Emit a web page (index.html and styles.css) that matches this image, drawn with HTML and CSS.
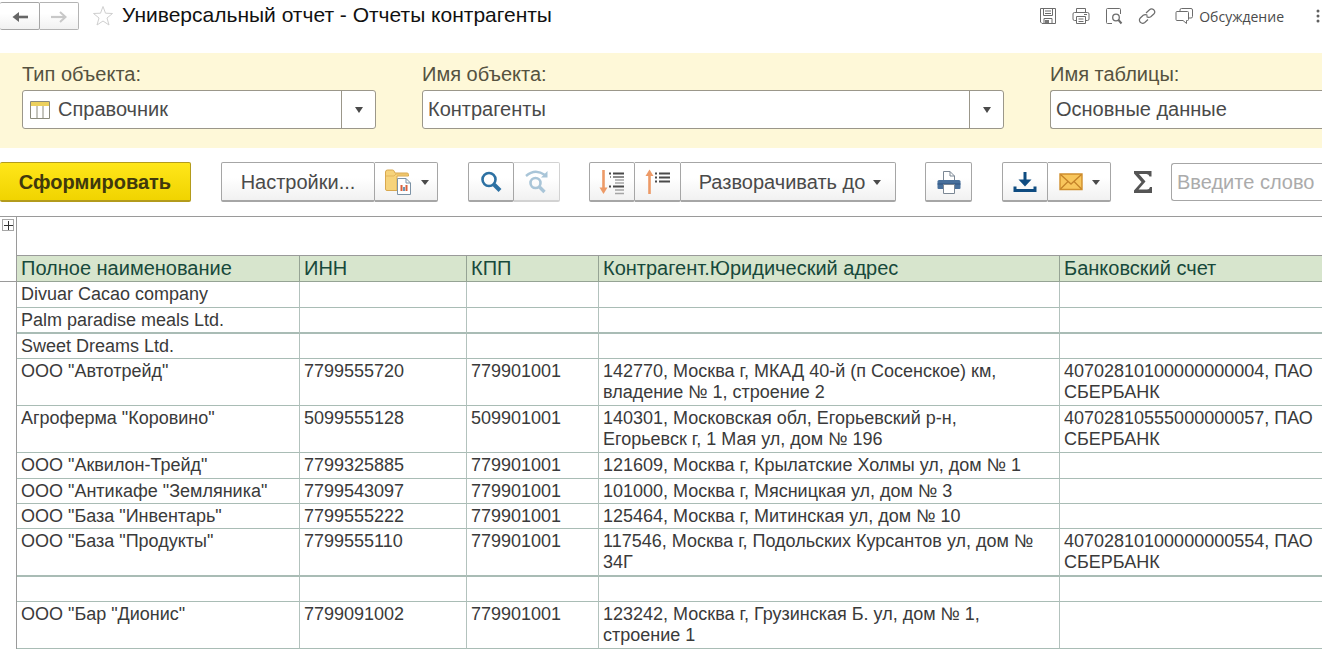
FILE: index.html
```html
<!DOCTYPE html>
<html lang="ru">
<head>
<meta charset="utf-8">
<title>Универсальный отчет - Отчеты контрагенты</title>
<link rel="stylesheet" href="styles.css">
</head>
<body>
<div class="page">
  <header class="titlebar">
    <div class="group nav">
      <button class="btn" type="button" aria-label="Назад"><svg width="18" height="14" viewBox="0 0 18 14"><path d="M5 7H17" stroke="#666" stroke-width="2.600"/><path d="M1.500 7L8 2V12Z" fill="#666"/></svg></button>
      <button class="btn" type="button" aria-label="Вперед" disabled><svg width="18" height="14" viewBox="0 0 18 14"><path d="M1 7H14" stroke="#c8c8c8" stroke-width="2.200"/><path d="M10 2L15.500 7L10 12" fill="none" stroke="#c8c8c8" stroke-width="2"/></svg></button>
    </div>
    <button class="plain star" type="button" aria-label="В избранное"><svg width="22" height="22" viewBox="0 0 22 22"><path d="M11 1.500L13.500 8.200L20.500 8.500L15 13L17 20L11 16L5 20L7 13L1.500 8.500L8.500 8.200Z" fill="#fff" stroke="#cfcfcf"/></svg></button>
    <h1 class="title">Универсальный отчет - Отчеты контрагенты</h1>
    <div class="tools">
      <button class="plain" type="button" aria-label="Сохранить"><svg width="18" height="18" viewBox="0 0 18 18" fill="none" stroke="#6c6c6c"><path d="M1.500 1.500H16.500V16.500H3L1.500 15Z"/><path d="M4.500 1.500V8.500H13.500V1.500M6 4H12M6 6.500H12M5 16.500V11.500H13V16.500"/><path d="M6 13H10V16H6Z" fill="#777" stroke="none"/></svg></button>
      <button class="plain" type="button" aria-label="Печать"><svg width="18" height="18" viewBox="0 0 18 18" fill="none" stroke="#6c6c6c"><path d="M4.500 5V1.500H13.500V5M4 13.500H2.500Q1 13.500 1 12V7Q1 5.500 2.500 5.500H15.500Q17 5.500 17 7V12Q17 13.500 15.500 13.500H14"/><path d="M4.500 9.500H13.500V16.500H4.500ZM6.500 12H11.500M6.500 14.500H11.500M12 7.500H15"/></svg></button>
      <button class="plain" type="button" aria-label="Просмотр"><svg width="18" height="18" viewBox="0 0 18 18" fill="none" stroke="#6c6c6c"><path d="M7 16.500H2.500Q1.500 16.500 1.500 15.500V2.500Q1.500 1.500 2.500 1.500H14.500Q15.500 1.500 15.500 2.500V7"/><circle cx="11" cy="10.500" r="3.300" stroke-width="1.300"/><path d="M13.500 13L16.500 16.500" stroke-width="2"/></svg></button>
      <button class="plain" type="button" aria-label="Ссылка"><svg width="18" height="18" viewBox="0 0 18 18" fill="none" stroke="#6c6c6c" stroke-width="1.200"><path d="M8 6L11.500 2.800Q13.500 1 15.800 2.800Q17.800 5 15.800 7L12.800 9.800Q10.500 11.300 8.500 9.500"/><path d="M10 12.500L6.800 15.500Q4.500 17.200 2.300 15.300Q.5 13 2.300 11L5.200 8.300Q7.500 6.700 9.500 8.500"/></svg></button>
      <button class="plain discuss" type="button"><svg width="18" height="18" viewBox="0 0 18 18" fill="none" stroke="#6c6c6c"><path d="M5 4.500V3Q5 1.500 6.500 1.500H16Q17.500 1.500 17.500 3V9.500Q17.500 11 16 11H14"/><path d="M2 4.500H12.500Q13.500 4.500 13.500 5.500V12.500Q13.500 13.500 12.500 13.500H11.500V16.500L8 13.500H2Q1 13.500 1 12.500V5.500Q1 4.500 2 4.500Z" fill="#fff"/></svg>Обсуждение</button>
      <button class="plain more" type="button" aria-label="Еще"><svg width="4" height="14" viewBox="0 0 4 14" fill="#5f5f5f"><circle cx="2" cy="2" r="1.500"/><circle cx="2" cy="7" r="1.500"/><circle cx="2" cy="12" r="1.500"/></svg></button>
    </div>
  </header>

  <section class="filters">
    <div class="field type">
      <label for="type">Тип объекта:</label>
      <div class="combo with-icon">
        <svg class="lead" width="20" height="18" viewBox="0 0 20 18"><path d="M.5 .5H19.500V17.500H.5Z" fill="#fff" stroke="#8a8a7c"/><path d="M1 1H19V5H1Z" fill="#ecd05c"/><path d="M7 5V17M13 5V17" stroke="#8a8a7c"/></svg>
        <select id="type"><option>Справочник</option></select>
        <span class="arrow"></span>
      </div>
    </div>
    <div class="field object">
      <label for="object">Имя объекта:</label>
      <div class="combo">
        <select id="object"><option>Контрагенты</option></select>
        <span class="arrow"></span>
      </div>
    </div>
    <div class="field table-name">
      <label for="table">Имя таблицы:</label>
      <div class="combo open-end">
        <select id="table"><option>Основные данные</option></select>
      </div>
    </div>
  </section>

  <div class="toolbar">
    <button class="btn primary" type="button">Сформировать</button>
    <div class="group">
      <button class="btn settings" type="button">Настройки...</button>
      <button class="btn menu" type="button" aria-label="Варианты отчета"><svg width="28" height="28" viewBox="0 0 28 28"><path d="M1.500 21V4Q1.500 2 3.500 2H8.500Q10 2 10.500 4L11 5H23Q24.500 5 24.500 6.500V8H13V22.500H3Q1.500 22.500 1.500 21Z" fill="#f6d37b" stroke="#d9a84e"/><path d="M2 8H10L12 6H24" fill="none" stroke="#e3b55e"/><path d="M13.500 10.500H22L26.500 15V26.500H13.500Z" fill="#fff" stroke="#7c93a6"/><path d="M22 10.500V15H26.500" fill="none" stroke="#7c93a6"/><path d="M16.500 17H18.500V23H16.500ZM21.500 17H23.500V23H21.500Z" fill="#d9603b"/><path d="M19 19H21V23H19Z" fill="#6b97b5"/></svg><span class="caret"></span></button>
    </div>
    <div class="group search-group">
      <button class="btn icon" type="button" aria-label="Найти"><svg width="22" height="22" viewBox="0 0 22 22" fill="none" stroke="#2d71a3"><circle cx="9" cy="8.500" r="6.500" stroke-width="2.600"/><path d="M14 13.500L20 19.500" stroke-width="4"/></svg></button>
      <button class="btn icon" type="button" aria-label="Найти далее" disabled><svg width="24" height="24" viewBox="0 0 24 24" fill="none" stroke="#a9c5d8"><path d="M1 6Q10 -2 20 5" stroke-width="2.400"/><path d="M22.500 1V7.500H16Z" fill="#a9c5d8" stroke="none"/><circle cx="10.500" cy="13" r="5" stroke-width="2.600"/><path d="M14.500 17L19.500 22" stroke-width="3.400"/></svg></button>
    </div>
    <div class="group expand-group">
      <button class="btn icon" type="button" aria-label="Развернуть все"><svg width="26" height="26" viewBox="0 0 26 26"><path d="M4.500 1V20" stroke="#ed9a67" stroke-width="2.600"/><path d="M.5 18.500H8.500L4.500 25Z" fill="#ed9a67"/><path d="M10 4.500H12M14 4.500H25M10 17.500H12M14 17.500H25" stroke="#4a4a4a" stroke-width="2.200"/><path d="M11 8H12M14 8H25" stroke="#666" stroke-width="1.600"/><path d="M16 11H25M16 14H25M16 21H25M16 24.500H25" stroke="#a5a5a5" stroke-width="1.600"/></svg></button>
      <button class="btn icon" type="button" aria-label="Свернуть все"><svg width="26" height="26" viewBox="0 0 26 26"><path d="M4.500 6V25" stroke="#ed9a67" stroke-width="2.600"/><path d="M.5 7H8.500L4.500 .5Z" fill="#ed9a67"/><path d="M10 4.500H12M14 4.500H25M10 8.500H12M14 8.500H25M10 12.500H12M14 12.500H25" stroke="#4a4a4a" stroke-width="2"/></svg></button>
      <button class="btn expand" type="button">Разворачивать до<span class="caret"></span></button>
    </div>
    <div class="group">
      <button class="btn print" type="button" aria-label="Печать"><svg width="24" height="24" viewBox="0 0 24 24"><path d="M6.500 11V1.500H13L17.500 6V11" fill="#fff" stroke="#7b8794"/><path d="M13 1.500V6H17.500" fill="none" stroke="#7b8794"/><path d="M2 10H22Q23.500 10 23.500 11.500V18Q23.500 19 22.500 19H1.500Q.5 19 .5 18V11.500Q.5 10 2 10Z" fill="#48709c"/><path d="M.5 14H23.500" stroke="#2f5380"/><path d="M6.500 14.500H17.500V23.500H6.500Z" fill="#fff" stroke="#7b8794"/></svg></button>
    </div>
    <div class="group">
      <button class="btn icon" type="button" aria-label="Сохранить"><svg width="24" height="22" viewBox="0 0 24 22"><path d="M12 1V10" stroke="#0f4c81" stroke-width="3"/><path d="M5.500 8.500H18.500L12 15.500Z" fill="#0f4c81"/><path d="M2 15.500V19.500H22V15.500" fill="none" stroke="#0f4c81" stroke-width="3"/></svg></button>
      <button class="btn menu" type="button" aria-label="Отправить"><svg width="24" height="18" viewBox="0 0 24 18"><path d="M1 1H23V16.500H1Z" fill="#f8c65c" stroke="#d08f2c" stroke-width="1.400"/><path d="M1.500 16L9 8.500M22.500 16L15 8.500M1.500 1.500L12 11L22.500 1.500" fill="none" stroke="#c5832a" stroke-width="1.300"/></svg><span class="caret"></span></button>
    </div>
    <button class="plain sum" type="button" aria-label="Сумма"><svg width="20" height="24" viewBox="0 0 20 24"><path d="M1 1H18.500V6.500H16.500Q16 4 13.500 4H6L12.500 11.500L5.500 19.500H14Q16.500 19.500 17 17H19V23H1V20.500L8.500 12L1 3.500Z" fill="#555"/></svg></button>
    <input class="search" type="text" aria-label="Поиск" placeholder="Введите слово">
  </div>

  <main class="report">
    <table class="sheet">
      <colgroup><col class="c-gutter"><col class="c-name"><col class="c-inn"><col class="c-kpp"><col class="c-addr"><col></colgroup>
      <thead>
        <tr class="blank"><td><button class="plus" type="button" aria-label="Развернуть"><svg width="9" height="9" viewBox="0 0 9 9"><path d="M0 4.500H9M4.500 0V9" stroke="#333"/></svg></button></td><td colspan="5"></td></tr>
        <tr class="head"><td></td><th>Полное наименование</th><th>ИНН</th><th>КПП</th><th>Контрагент.Юридический адрес</th><th>Банковский счет</th></tr>
      </thead>
      <tbody>
        <tr class="loose"><td></td><td>Divuar Cacao company</td><td></td><td></td><td></td><td></td></tr>
        <tr class="thick"><td></td><td>Palm paradise meals Ltd.</td><td></td><td></td><td></td><td></td></tr>
        <tr><td></td><td>Sweet Dreams Ltd.</td><td></td><td></td><td></td><td></td></tr>
        <tr class="double"><td></td><td>ООО "Автотрейд"</td><td>7799555720</td><td>779901001</td><td class="address">142770, Москва г, МКАД 40-й (п Сосенское) км, владение № 1, строение 2</td><td>40702810100000000004, ПАО СБЕРБАНК</td></tr>
        <tr class="double"><td></td><td>Агроферма "Коровино"</td><td>5099555128</td><td>509901001</td><td class="address">140301, Московская обл, Егорьевский р-н, Егорьевск г, 1 Мая ул, дом № 196</td><td>40702810555000000057, ПАО СБЕРБАНК</td></tr>
        <tr class="loose"><td></td><td>ООО "Аквилон-Трейд"</td><td>7799325885</td><td>779901001</td><td class="address">121609, Москва г, Крылатские Холмы ул, дом № 1</td><td></td></tr>
        <tr><td></td><td>ООО "Антикафе "Земляника"</td><td>7799543097</td><td>779901001</td><td class="address">101000, Москва г, Мясницкая ул, дом № 3</td><td></td></tr>
        <tr><td></td><td>ООО "База "Инвентарь"</td><td>7799555222</td><td>779901001</td><td class="address">125464, Москва г, Митинская ул, дом № 10</td><td></td></tr>
        <tr class="double thick"><td></td><td>ООО "База "Продукты"</td><td>7799555110</td><td>779901001</td><td class="address">117546, Москва г, Подольских Курсантов ул, дом № 34Г</td><td>40702810100000000554, ПАО СБЕРБАНК</td></tr>
        <tr><td></td><td></td><td></td><td></td><td></td><td></td></tr>
        <tr class="double"><td></td><td>ООО "Бар "Дионис"</td><td>7799091002</td><td>779901001</td><td class="address">123242, Москва г, Грузинская Б. ул, дом № 1, строение 1</td><td></td></tr>
      </tbody>
    </table>
  </main>
</div>
</body>
</html>
```
FILE: styles.css
```css
* { box-sizing: border-box; }

body {
  margin: 0;
  background: #fff;
  color: #4a4a4a;
  font-family: "Liberation Sans", Arial, sans-serif;
  font-size: 20px;
}

.page { overflow: hidden; }

button, select, input { font: inherit; color: inherit; }

svg { display: block; flex: none; }

/* Title bar */
.titlebar {
  display: flex;
  align-items: flex-start;
  height: 53px;
  padding-top: 2px;
}

.title {
  flex: 1;
  margin: 0;
  padding-left: 8px;
  font-size: 21px;
  font-weight: normal;
  line-height: 26px;
  color: #111;
  white-space: nowrap;
}

.plain {
  display: flex;
  align-items: center;
  padding: 0;
  border: 0;
  background: none;
}

.star { margin: 3px 0 0 13px; }

.tools {
  display: flex;
  align-items: center;
  gap: 15px;
  height: 28px;
  padding-right: 2px;
}

.discuss {
  gap: 6px;
  margin-left: 4px;
  font-family: "Open Sans", "Noto Sans", sans-serif;
  font-size: 14px;
}

.more { margin-left: 17px; }

/* Buttons */
.group { display: flex; flex: none; }

.btn {
  display: flex;
  align-items: center;
  justify-content: center;
  height: 40px;
  padding: 1px 0 0;
  border: 1px solid #a6a6a6;
  border-bottom: 2px solid #a6a6a6;
  border-radius: 2px;
  background: linear-gradient(#fff 40%, #f1f1f1);
  white-space: nowrap;
}

.group .btn + .btn {
  border-left: 0;
  border-top-left-radius: 0;
  border-bottom-left-radius: 0;
}

.btn:disabled { border-color: #d2d2d2; }

.nav .btn { width: 39px; height: 28px; border-bottom-width: 1px; }
.nav .btn:first-child { width: 40px; border-left: 0; }
.nav .btn:disabled { border-color: #b4b4b4; }

.primary {
  flex: none;
  width: 191px;
  border-color: #b39b1c;
  border-left: 0;
  background: linear-gradient(#ffe61a, #f0d400);
  color: #40390c;
  font-weight: bold;
}

.settings { width: 154px; }
.icon { width: 46px; }
.print { width: 47px; }
.menu { width: 63px; gap: 9px; }
.expand { width: 215px; gap: 8px; padding-left: 4px; }

.caret {
  border: 4px solid transparent;
  border-top: 5px solid #4a4a4a;
  border-bottom: 0;
}

/* Filters */
.filters {
  display: flex;
  gap: 46px;
  padding: 10px 0 19px 22px;
  background: #fef8d8;
}

.field { display: flex; flex-direction: column; gap: 5px; }
.field label { line-height: 22px; color: #55523f; }
.type { width: 354px; }
.object { width: 582px; }
.table-name { flex: 1; }

.combo {
  display: grid;
  grid-template-columns: 1fr 34px;
  height: 39px;
  border: 1px solid #9b978a;
  border-radius: 3px;
  background: #fff;
}

.with-icon { grid-template-columns: 30px 1fr 34px; }
.lead { align-self: center; justify-self: end; margin-right: 3px; }

.combo select {
  grid-column: 1 / -1;
  grid-row: 1;
  width: 100%;
  padding: 0 40px 2px 5px;
  border: 0;
  background: none;
  appearance: none;
}

.with-icon select { grid-column: 2 / -1; }

.combo .arrow {
  display: grid;
  place-items: center;
  grid-column: -2;
  grid-row: 1;
  border-left: 1px solid #9b978a;
  pointer-events: none;
}

.arrow::after {
  content: "";
  border: 4px solid transparent;
  border-top: 6px solid #4a4a4a;
  border-bottom: 0;
}

.open-end {
  border-right: 0;
  border-radius: 3px 0 0 3px;
}

/* Toolbar */
.toolbar {
  display: flex;
  align-items: center;
  gap: 30px;
  padding: 14px 0;
}

.search-group, .expand-group { margin-right: -1px; }
.sum { margin: 0 -8px; }

.search {
  flex: 1;
  min-width: 0;
  height: 38px;
  margin-left: -4px;
  padding: 0 5px;
  border: 1px solid #a6a6a6;
  border-right: 0;
  border-radius: 3px 0 0 3px;
}

.search::placeholder { color: #ababab; }

/* Report */
.report { border-top: 1px solid #9a9a9a; }

.sheet {
  width: 100%;
  table-layout: fixed;
  border-spacing: 0;
  color: #3a3a3a;
  font-size: 18px;
  line-height: 21px;
}

.c-gutter { width: 17px; }
.c-name { width: 283px; }
.c-inn { width: 167px; }
.c-kpp { width: 132px; }
.c-addr { width: 461px; }

.sheet td, .sheet th {
  padding: 2px 4px 0;
  border-right: 1px solid #b3c2bd;
  border-bottom: 1px solid #a9bcb5;
  text-align: left;
  vertical-align: top;
}

.sheet .address { padding-right: 20px; }

.sheet td:last-child, .sheet th:last-child { border-right: 0; }

.sheet td:first-child {
  padding: 2px;
  border-right-color: #9a9a9a;
  border-bottom: 0;
}

.sheet .blank td { border-bottom-color: #9a9a9a; }
.sheet .blank td:first-child { border-bottom: 0; }
.sheet .head td:first-child { border-bottom: 1px solid #9a9a9a; }

.sheet th {
  border-color: #95a394;
  background: #d7e5cd;
  color: #17493b;
  font-size: 20px;
  font-weight: normal;
}

.sheet tr { height: 25px; }
.sheet .blank { height: 39px; }
.sheet .head, .sheet .loose, .sheet .thick { height: 26px; }
.sheet .double { height: 47px; }
.sheet .double.thick { height: 48px; }
.sheet .thick td:not(:first-child) { border-bottom-width: 2px; }

.plus {
  display: grid;
  place-items: center;
  width: 12px;
  height: 12px;
  padding: 0;
  border: 1px solid #a6a6a6;
  background: #fff;
}
```
